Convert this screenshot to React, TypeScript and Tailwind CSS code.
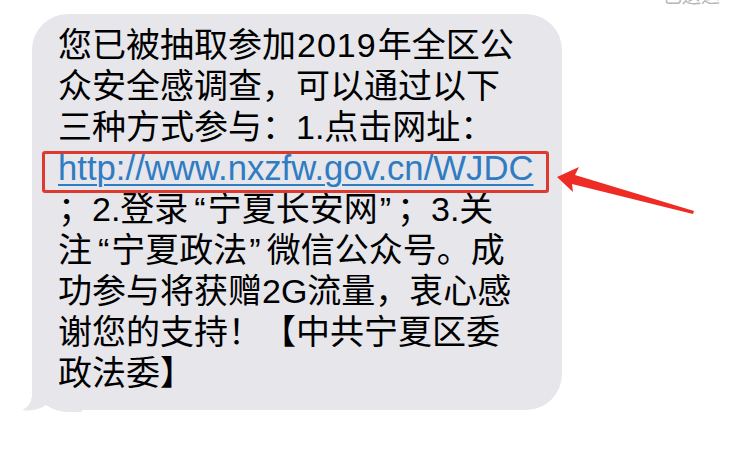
import React from "react";

const L = ({ c }: { c: string }) => <span className="ml-[6px] mr-[2px]">{c}</span>;
const R = ({ c }: { c: string }) => <span className="ml-[2px] mr-[6px]">{c}</span>;

export default function App() {
  return (
    <div
      className="relative w-[750px] h-[471px] overflow-hidden bg-white"
      style={{ fontFamily: "'Liberation Sans', 'Noto Sans CJK SC', sans-serif" }}
    >
      <div className="absolute right-[30px] top-[-17px] text-[19px] text-[#b8b8b8]">已送达</div>
      <div className="relative ml-[32px] mt-[14px] w-[530px] h-[396px] rounded-[36px] bg-[#e6e6eb] pl-[26px] pt-[11px] text-[34px] leading-[41px] text-black">
        <svg className="absolute left-[-10px] bottom-[-2px] z-0" width="60" height="52" viewBox="0 0 60 52">
          <path d="M10 0 L10 36 Q9 46 0 50 Q14 52 24 45 Q34 52 46 52 L60 52 L60 0 Z" fill="#e6e6eb" />
        </svg>
        <div className="relative z-10 whitespace-nowrap">
          <div>
            您已被抽取参加<span className="ml-[1px] mr-[1px] tracking-[1px]">2019</span>年全区公
          </div>
          <div>众安全感调查，可以通过以下</div>
          <div>三种方式参与：1.点击网址：</div>
          <div className="relative text-[34.7px] text-[#2f7cc3] underline decoration-[2px] underline-offset-[4px]">
            http://www.nxzfw.gov.cn/WJDC
            <span className="absolute left-[-16px] top-[3px] w-[507px] h-[42px] rounded-[3px] border-[3px] border-[#dc3a2f]" />
          </div>
          <div>
            ；2.登录<L c="“" />宁夏长安网<R c="”" />；3.关
          </div>
          <div>
            注<L c="“" />宁夏政法<R c="”" />微信公众号。成
          </div>
          <div>功参与将获赠2G流量，衷心感</div>
          <div>谢您的支持！【中共宁夏区委</div>
          <div>政法委】</div>
        </div>
      </div>
      <svg className="absolute left-0 top-0 pointer-events-none" width="750" height="471" viewBox="0 0 750 471">
        <polygon
          points="557,177 579,167 575,175 694,211 693,214 572,184 573,192"
          fill="#ee2b24"
        />
      </svg>
    </div>
  );
}
